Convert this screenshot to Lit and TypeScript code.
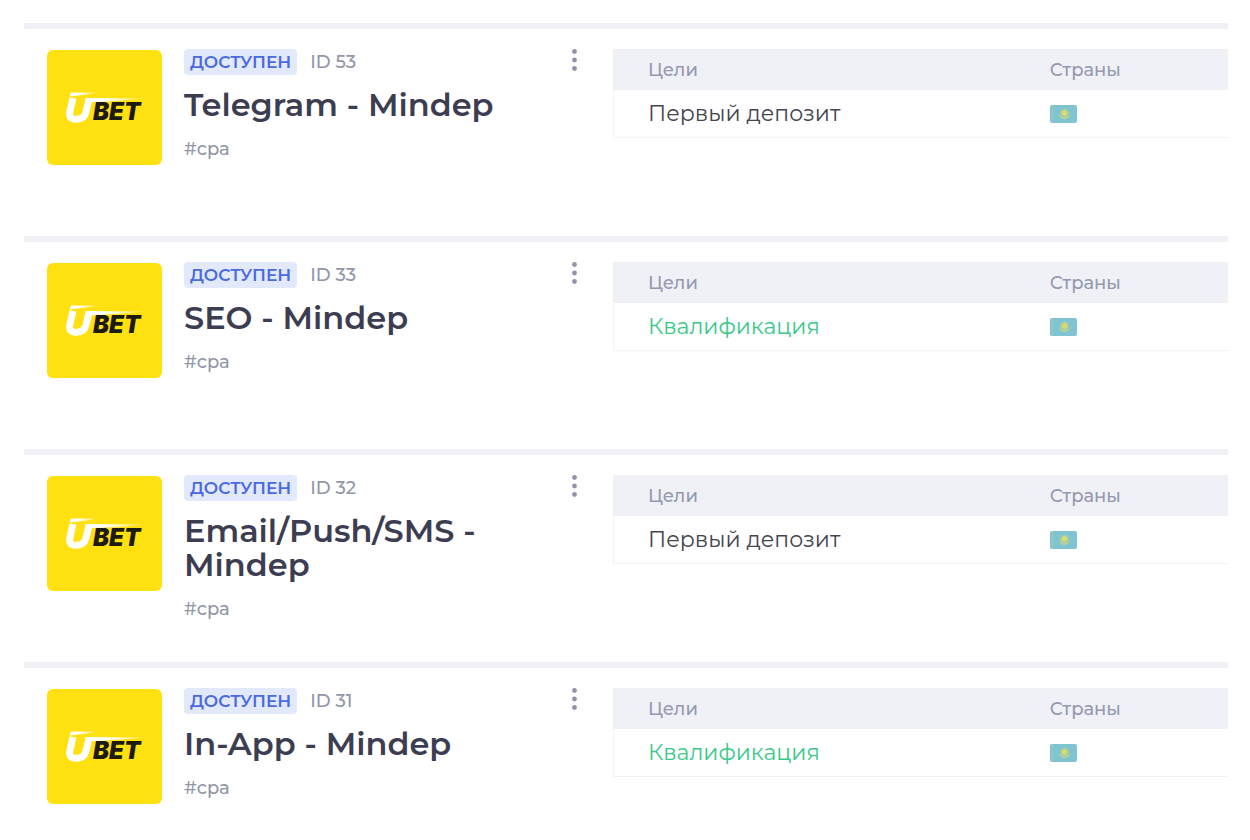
import { LitElement, html, css, svg } from "lit";
import { customElement, property } from "lit/decorators.js";

interface Offer {
  id: number;
  title: string;
  goal: string;
  qualified: boolean;
}

const OFFERS: Offer[] = [
  { id: 53, title: "Telegram - Mindep", goal: "Первый депозит", qualified: false },
  { id: 33, title: "SEO - Mindep", goal: "Квалификация", qualified: true },
  { id: 32, title: "Email/Push/SMS - Mindep", goal: "Первый депозит", qualified: false },
  { id: 31, title: "In-App - Mindep", goal: "Квалификация", qualified: true },
];

const rays = Array.from({ length: 12 }, (_, i) => i * 30);

@customElement("ubet-logo")
export class UbetLogo extends LitElement {
  static styles = css`
    :host { display: block; }
    .logo { display: block; width: 115px; height: 115px; border-radius: 6px; background: #ffe010; }
    .bet { font: italic 900 24px Inter, "Liberation Sans", sans-serif; fill: #1d1b10; }
  `;
  render() {
    return html`
      <svg class="logo" viewBox="0 0 115 115" role="img" aria-label="UBET">
        <defs>
          <linearGradient id="fade" x1="0" x2="1">
            <stop offset="0.3" stop-color="#fff" />
            <stop offset="1" stop-color="#fff" stop-opacity="0.3" />
          </linearGradient>
        </defs>
        <path d="M24 42.500 50 42.500 40 44.500 22.500 46.500z" fill="url(#fade)" />
        <path d="M38.500 48 98 48.500 70 51 38.500 52.500z" fill="url(#fade)" />
        <path d="M26 48 23 61C21.500 67.500 24.500 69.300 29.500 69.300 34.500 69.300 37.800 67 39 62L42 49.500" fill="none" stroke="#fff" stroke-width="7" />
        <text class="bet" x="46" y="70">BET</text>
      </svg>
    `;
  }
}

@customElement("kz-flag")
export class KzFlag extends LitElement {
  static styles = css`
    :host { display: block; }
    .flag { display: block; width: 27px; height: 18px; border-radius: 2px; }
  `;
  render() {
    return html`
      <svg class="flag" viewBox="0 0 27 18" role="img" aria-label="Казахстан">
        <rect width="27" height="18" fill="#80c4d2" />
        <path d="M2.500 1v16" stroke="#a9cf9f" stroke-width="1" stroke-dasharray="2 1" />
        <circle cx="14.500" cy="8" r="3" fill="#d9d96c" />
        ${rays.map((a) => svg`<path d="M14.500 3.500v1.200" stroke="#d9d96c" stroke-width=".8" transform="rotate(${a} 14.500 8)" />`)}
        <path d="M8.500 8c1 3.500 3 3 6 4.500 3-1.500 5-1 6-4.500-.5 4.500-3 5-6 6.200-3-1.200-5.500-1.700-6-6.200z" fill="#c3d387" />
      </svg>
    `;
  }
}

@customElement("offer-card")
export class OfferCard extends LitElement {
  @property({ attribute: false }) offer!: Offer;

  static styles = css`
    :host { display: block; }
    .offer {
      display: grid;
      grid-template-columns: minmax(0, 589fr) minmax(0, 615fr);
      align-items: start;
      box-sizing: border-box;
      min-height: 213px;
      padding: 20px 0;
      border-top: 6px solid #f0f0f6;
    }
    .summary { display: flex; align-items: flex-start; padding: 0 28px 0 23px; }
    .logo { flex: none; margin: 1px 22px 0 0; }
    .info { flex: 1; min-width: 0; }
    .meta { display: flex; align-items: center; gap: 13px; }
    .badge {
      padding: 0 6px;
      border-radius: 4px;
      background: #e2e9fb;
      color: #4a69e2;
      font-size: 17px;
      font-weight: 600;
      line-height: 26px;
    }
    .id { color: #9196a8; font-size: 18px; font-weight: 500; line-height: 26px; }
    .title { margin: 13px 0 15px; color: #3d3d52; font-size: 32px; font-weight: 600; line-height: 34px; }
    .tag { display: inline-block; color: #9196a8; font-size: 18px; font-weight: 500; line-height: 24px; text-decoration: none; }
    .more { flex: none; display: block; width: 21px; padding: 0; border: 0; background: none; cursor: pointer; }
    .dots { display: block; width: 21px; height: 24px; fill: #9094a8; }
    .goals { width: 100%; border-collapse: separate; border-spacing: 0; table-layout: fixed; text-align: left; }
    .goals th { height: 41px; padding: 0; background: #f0f1f6; color: #9499b0; font-size: 18px; font-weight: 500; line-height: 24px; }
    .goals td { height: 47px; padding: 0; border-bottom: 1px solid #f3f3f6; color: #45454f; font-size: 22px; line-height: 28px; }
    .goals .goal { padding-left: 35px; }
    .goals td.goal { border-left: 1px solid #f3f3f6; padding-left: 34px; }
    .goals td.qualified { color: #3ac98a; }
    .goal-column { width: 71%; }
  `;

  render() {
    const { id, title, goal, qualified } = this.offer;
    return html`
      <article class="offer">
        <div class="summary">
          <ubet-logo class="logo"></ubet-logo>
          <div class="info">
            <div class="meta"><span class="badge">ДОСТУПЕН</span><span class="id">ID ${id}</span></div>
            <h2 class="title">${title}</h2>
            <a class="tag" href="#cpa">#cpa</a>
          </div>
          <button class="more" type="button" aria-label="Действия">
            <svg class="dots" viewBox="0 0 21 24" aria-hidden="true">
              <circle cx="10.500" cy="2.500" r="2.400" /><circle cx="10.500" cy="11" r="2.400" /><circle cx="10.500" cy="19.500" r="2.400" />
            </svg>
          </button>
        </div>
        <table class="goals">
          <colgroup><col class="goal-column" /><col /></colgroup>
          <thead>
            <tr><th class="goal" scope="col">Цели</th><th scope="col">Страны</th></tr>
          </thead>
          <tbody>
            <tr><td class="goal ${qualified ? "qualified" : ""}">${goal}</td><td><kz-flag></kz-flag></td></tr>
          </tbody>
        </table>
      </article>
    `;
  }
}

@customElement("app-root")
export class AppRoot extends LitElement {
  static styles = css`
    :host {
      display: block;
      min-height: 100vh;
      background: #fff;
      font-family: Montserrat, Inter, "Noto Sans", sans-serif;
    }
    .offers { padding: 23px 22px 0 24px; }
  `;
  render() {
    return html`<main class="offers">${OFFERS.map((o) => html`<offer-card .offer=${o}></offer-card>`)}</main>`;
  }
}
